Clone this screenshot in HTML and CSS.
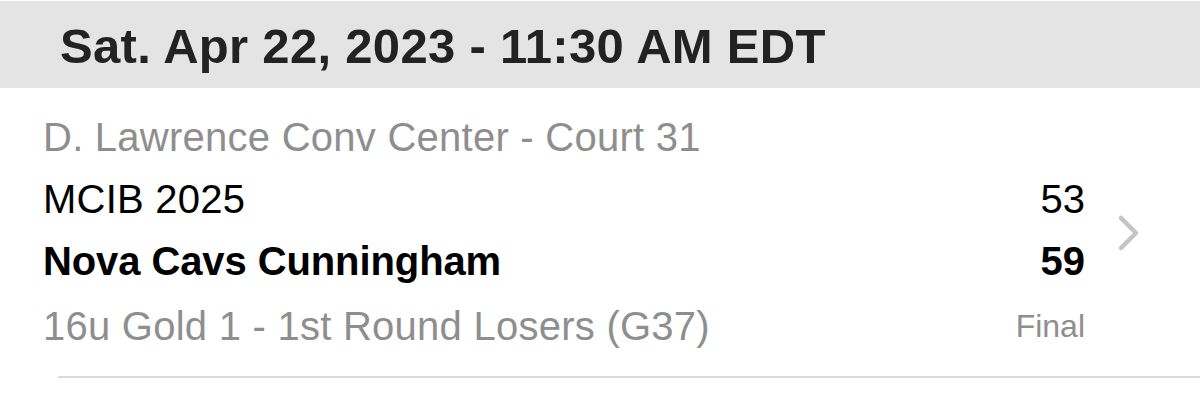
FILE: index.html
```html
<!DOCTYPE html>
<html>
<head>
<meta charset="utf-8">
<link rel="stylesheet" href="styles.css">
</head>
<body>
  <div class="day-header">Sat. Apr 22, 2023 - 11:30 AM EDT</div>
  <div class="game">
    <div class="game-body">
      <div class="venue">D. Lawrence Conv Center - Court 31</div>
      <div class="team-row">
        <span class="team">MCIB 2025</span>
        <span class="score">53</span>
      </div>
      <div class="team-row winner">
        <span class="team">Nova Cavs Cunningham</span>
        <span class="score">59</span>
      </div>
      <div class="meta-row">
        <span class="division">16u Gold 1 - 1st Round Losers (G37)</span>
        <span class="status">Final</span>
      </div>
    </div>
    <div class="disclosure">
      <svg width="24" height="38" viewBox="0 0 24 38">
        <path d="M4 4 L19 19 L4 34" fill="none" stroke="#c4c4c8" stroke-width="4.5" stroke-linecap="round" stroke-linejoin="round"/>
      </svg>
    </div>
  </div>
  <div class="separator"></div>
</body>
</html>
```

FILE: styles.css
```css
html, body {
  margin: 0;
  padding: 0;
  background: #ffffff;
  font-family: "Liberation Sans", Arial, sans-serif;
}

body {
  padding-top: 1px;
}

.day-header {
  background: #e4e4e4;
  height: 87px;
  box-sizing: border-box;
  padding-left: 60px;
  padding-top: 19px;
  font-size: 49px;
  line-height: 52px;
  font-weight: bold;
  letter-spacing: 0.3px;
  color: #222222;
}

.game {
  display: flex;
  align-items: center;
  padding-left: 43px;
  padding-top: 27px;
}

.game-body {
  width: 1042px;
  display: flex;
  flex-direction: column;
}

.venue,
.team-row,
.meta-row {
  font-size: 40px;
  line-height: 62px;
  letter-spacing: 0.25px;
  display: flex;
  justify-content: space-between;
}

.venue {
  color: #8e8e8e;
  line-height: 44px;
  margin-bottom: 9px;
}

.team-row {
  color: #000000;
}

.winner {
  font-weight: bold;
  letter-spacing: -0.1px;
}

.meta-row {
  color: #8e8e8e;
  margin-top: 3px;
}

.score,
.status {
  letter-spacing: 0;
}

.status {
  font-size: 32px;
}

.disclosure {
  padding-left: 32px;
  padding-bottom: 6px;
  display: flex;
  align-items: center;
}

.separator {
  margin-left: 58px;
  margin-top: 19px;
  height: 2px;
  background: #dadada;
}
```
